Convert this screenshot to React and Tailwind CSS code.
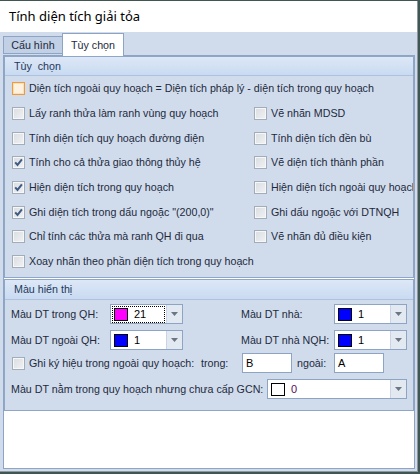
import React from "react";

const FONT = { fontFamily: '"Liberation Sans", Arial, sans-serif' };

function CheckBox({ checked, focus }) {
  return (
    <div
      className={`w-[13px] h-[13px] shrink-0 border flex items-center justify-center ${
        focus ? "border-[#ef9a3c] bg-[#fff4e6]" : "border-[#a3adb9] bg-[#f4f5f7]"
      }`}
    >
      <div
        className={`w-[11px] h-[11px] border flex items-center justify-center ${
          focus ? "border-[#fde0b8] bg-[#fdf1e0]" : "border-[#f7f7f7] bg-gradient-to-br from-[#dcdfe3] to-[#eef0f2]"
        }`}
      >
        {checked && (
          <svg width="9" height="9" viewBox="0 0 9 9">
            <path d="M1.2 4.4 L3.5 6.9 L7.9 1.4" fill="none" stroke="#3f5b85" strokeWidth="2" />
          </svg>
        )}
      </div>
    </div>
  );
}

function Check({ label, checked, focus }) {
  return (
    <div className="flex items-center gap-[4px] whitespace-nowrap overflow-hidden">
      <CheckBox checked={checked} focus={focus} />
      <span className="text-[10.7px] text-[#1e2a3c] leading-none">{label}</span>
    </div>
  );
}

function Combo({ color, value, focus, className }) {
  return (
    <div className={`h-[20px] shrink-0 border border-[#8ea4c4] bg-white flex ${className}`}>
      <div className="flex-1 flex items-center px-[1px]">
        <div
          className={`flex-1 h-[17px] flex items-center gap-[6px] pl-[2px] ${
            focus ? "outline outline-1 outline-dotted outline-black -outline-offset-1" : ""
          }`}
        >
          <div className="w-[14px] h-[13px] border border-black" style={{ backgroundColor: color }} />
          <span className={`text-[11px] leading-none ${value === "0" ? "text-[#5a0a5a]" : "text-black"}`}>{value}</span>
        </div>
      </div>
      <div className="w-[16px] border-l border-[#c9d5e5] bg-[#e3e9f1] flex items-center justify-center">
        <svg width="7" height="4" viewBox="0 0 7 4">
          <path d="M0 0 H7 L3.5 4 Z" fill="#6a7686" />
        </svg>
      </div>
    </div>
  );
}

function GroupHeader({ title, h }) {
  return (
    <div className={`${h} shrink-0 flex items-center pl-[9px] bg-gradient-to-b from-[#dde8f7] to-[#c9daf1] border-b border-[#adc2df]`}>
      <span className="text-[10.7px] text-[#1e395b] leading-none whitespace-pre">{title}</span>
    </div>
  );
}

const rows = [
  [["Lấy ranh thửa làm ranh vùng quy hoạch", false], ["Vẽ nhãn MDSD", false]],
  [["Tính diện tích quy hoạch đường điện", false], ["Tính diện tích đền bù", false]],
  [["Tính cho cả thửa giao thông thủy hệ", true], ["Vẽ diện tích thành phần", false]],
  [["Hiện diện tích trong quy hoạch", true], ["Hiện diện tích ngoài quy hoạch", false]],
  [['Ghi diện tích trong dấu ngoặc "(200,0)"', true], ["Ghi dấu ngoặc với DTNQH", false]],
  [["Chỉ tính các thửa mà ranh QH đi qua", false], ["Vẽ nhãn đủ điều kiện", false]],
];

export default function App() {
  return (
    <div className="w-[420px] h-[474px] bg-[#3f5653] pt-[1px] pr-[2px] overflow-hidden" style={FONT}>
      <div className="w-[418px] h-[471px] border-r border-b border-[#8e96a0] bg-[#d0dcec] flex flex-col">
        {/* Title */}
        <div className="h-[31px] bg-white flex items-center pl-[9px] shrink-0">
          <span className="text-[13px] text-black" style={{ fontFamily: '"Noto Sans", sans-serif' }}>
            Tính diện tích giải tỏa
          </span>
        </div>

        {/* Tabs */}
        <div className="h-[23px] flex items-end pl-[3px] shrink-0">
          <div className="h-[18px] w-[59px] mb-[1px] border border-r-0 border-[#8ea4c4] bg-[#c1d0e5] flex items-center justify-center">
            <span className="text-[10.7px] text-[#1e2a3c] leading-none">Cấu hình</span>
          </div>
          <div className="h-[23px] w-[62px] border border-b-0 border-[#8ea4c4] bg-white flex items-center justify-center -mb-[1px] relative">
            <span className="text-[10.7px] text-[#1e2a3c] leading-none">Tùy chọn</span>
          </div>
        </div>

        {/* Tab page */}
        <div className="flex-1 min-h-0 ml-[3px] mr-[2px] mb-[2px] border border-[#8ea4c4] bg-white flex flex-col overflow-hidden">
          {/* Group 1 */}
          <div className="h-[222px] shrink-0 border border-[#8ea6c8] bg-[#d0dcec] flex flex-col overflow-hidden">
            <GroupHeader title="Tùy  chọn" h="h-[19px]" />
            <div className="pl-[7px]">
              <div className="h-[25px] flex items-center">
                <Check label="Diện tích ngoài quy hoạch = Diện tích pháp lý - diện tích trong quy hoạch" focus />
              </div>
              {rows.map(([l, r], i) => (
                <div key={i} className="h-[24.7px] flex items-center">
                  <div className="w-[242px] shrink-0">
                    <Check label={l[0]} checked={l[1]} />
                  </div>
                  <div className="flex-1 min-w-0">
                    <Check label={r[0]} checked={r[1]} />
                  </div>
                </div>
              ))}
              <div className="h-[24.7px] flex items-center">
                <Check label="Xoay nhãn theo phần diện tích trong quy hoạch" />
              </div>
            </div>
          </div>

          {/* Group 2 */}
          <div className="h-[132px] shrink-0 border border-[#8ea6c8] bg-[#d0dcec] mt-[1px] flex flex-col overflow-hidden">
            <GroupHeader title="Màu hiển thị" h="h-[20px]" />
            <div className="pl-[6px] pt-[4px] flex flex-col text-[10.7px] text-[#1e2a3c]">
              <div className="flex items-center">
                <span className="w-[99px] shrink-0 leading-none">Màu DT trong QH:</span>
                <Combo className="w-[73px]" color="#ff00ff" value="21" focus />
                <span className="ml-[58px] w-[93px] shrink-0 leading-none">Màu DT nhà:</span>
                <Combo className="w-[73px]" color="#0000ff" value="1" />
              </div>
              <div className="flex items-center mt-[6px]">
                <span className="w-[99px] shrink-0 leading-none">Màu DT ngoài QH:</span>
                <Combo className="w-[73px]" color="#0000ff" value="1" />
                <span className="ml-[58px] w-[93px] shrink-0 leading-none">Màu DT nhà NQH:</span>
                <Combo className="w-[73px]" color="#0000ff" value="1" />
              </div>
              <div className="flex items-center h-[20px] mt-[3px]">
                <div className="w-[190px] shrink-0 pl-[1px]">
                  <Check label="Ghi ký hiệu trong ngoài quy hoạch:" />
                </div>
                <span className="w-[41px] shrink-0 leading-none">trong:</span>
                <div className="w-[50px] h-[20px] shrink-0 border border-[#8ea4c4] bg-white flex items-center pl-[3px]">
                  <span className="text-[11px] leading-none text-black">B</span>
                </div>
                <span className="ml-[5px] w-[37px] shrink-0 leading-none">ngoài:</span>
                <div className="w-[50px] h-[20px] shrink-0 border border-[#8ea4c4] bg-white flex items-center pl-[3px]">
                  <span className="text-[11px] leading-none text-black">A</span>
                </div>
              </div>
              <div className="flex items-center mt-[6px]">
                <span className="w-[256px] shrink-0 leading-none whitespace-nowrap">Màu DT nằm trong quy hoạch nhưng chưa cấp GCN:</span>
                <Combo className="w-[140px]" color="#ffffff" value="0" />
              </div>
            </div>
          </div>
        </div>
      </div>
    </div>
  );
}
